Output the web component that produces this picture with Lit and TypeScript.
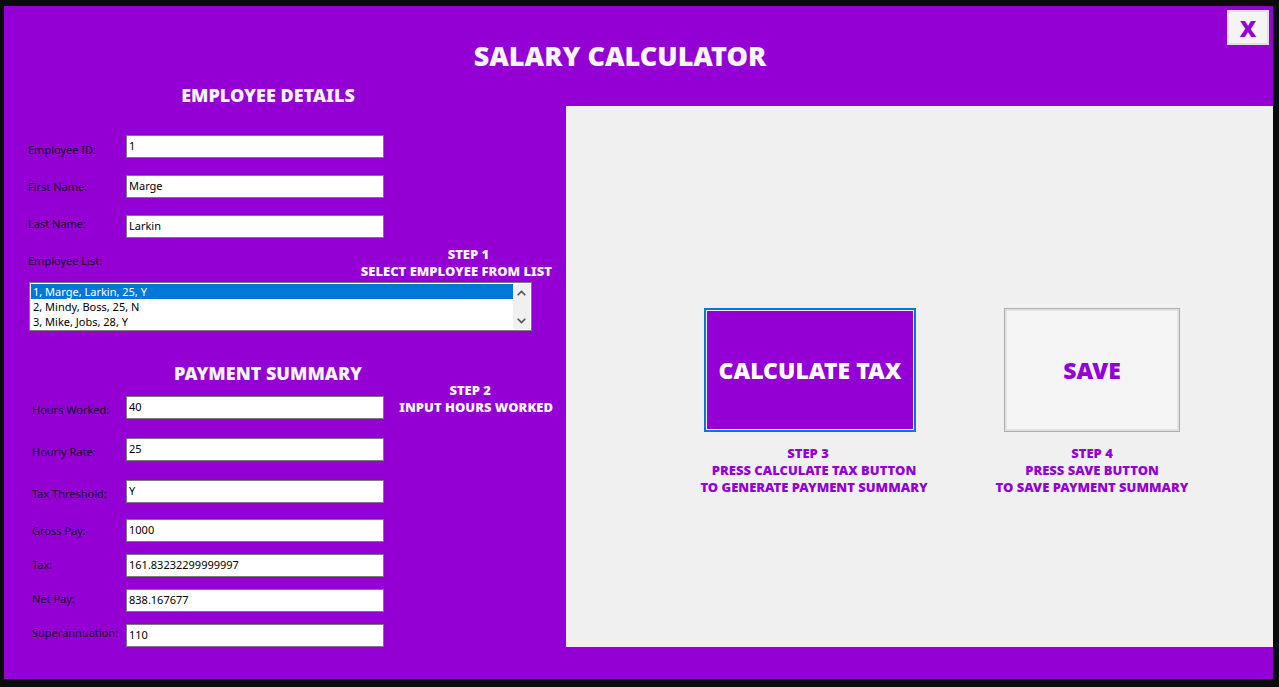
import { LitElement, html, css } from "lit";
import { customElement, state } from "lit/decorators.js";

interface Field {
  id: string;
  label: string;
  value: string;
}

const employeeFields: Field[] = [
  { id: "employee-id", label: "Employee ID:", value: "1" },
  { id: "first-name", label: "First Name:", value: "Marge" },
  { id: "last-name", label: "Last Name:", value: "Larkin" },
];

const rateFields: Field[] = [
  { id: "hours", label: "Hours Worked:", value: "40" },
  { id: "rate", label: "Hourly Rate:", value: "25" },
  { id: "threshold", label: "Tax Threshold:", value: "Y" },
];

const resultFields: Field[] = [
  { id: "gross", label: "Gross Pay:", value: "1000" },
  { id: "tax", label: "Tax:", value: "161.83232299999997" },
  { id: "net", label: "Net Pay:", value: "838.167677" },
  { id: "super", label: "Superannuation:", value: "110" },
];

const employees = ["1, Marge, Larkin, 25, Y", "2, Mindy, Boss, 25, N", "3, Mike, Jobs, 28, Y"];

@customElement("app-root")
export class AppRoot extends LitElement {
  @state() private selected = 0;

  static styles = css`
    :host {
      display: block;
      --violet: #9400d3;
      --display: "Noto Sans", "Open Sans", sans-serif;
      font: 11px/16px "Noto Sans", "Open Sans", sans-serif;
      color: #18022a;
    }
    * {
      box-sizing: border-box;
    }
    .frame {
      display: flex;
      min-height: 100vh;
      padding: 6px 6px 8px 4px;
      background: #0b0b0b;
    }
    .window {
      flex: 1;
      display: flex;
      flex-direction: column;
      padding-bottom: 32px;
      background: var(--violet);
    }
    .header {
      display: flex;
      align-items: flex-start;
      padding: 4px 4px 0 9px;
    }
    h1,
    h2,
    p {
      margin: 0;
      font-family: var(--display);
      font-weight: 900;
      text-align: center;
      color: whitesmoke;
    }
    h1 {
      flex: 1;
      padding: 28px 0 9px;
      font-size: 27px;
      line-height: 36px;
    }
    h2 {
      padding-left: 26px;
      font-size: 18px;
      line-height: 24px;
    }
    button {
      font-family: var(--display);
      font-weight: 900;
      padding: 0;
      border-radius: 0;
    }
    .close {
      width: 42px;
      height: 35px;
      border: 2px solid #e1e1e1;
      background: #f4f4f4;
      color: var(--violet);
      font-size: 23px;
      line-height: 28px;
    }
    .main {
      flex: 1;
      display: grid;
      grid-template-columns: minmax(0, 562fr) minmax(0, 707fr);
    }
    .details {
      padding-left: 24px;
    }
    .form {
      display: grid;
      grid-template-columns: 98px 258px;
    }
    .form h2 {
      grid-column: 2;
    }
    .labels,
    .inputs {
      display: flex;
      flex-direction: column;
    }
    .employee .labels {
      gap: 21px;
      padding-top: 35px;
    }
    .employee .inputs {
      gap: 17px;
      padding-top: 28px;
    }
    .pay {
      padding-left: 4px;
      grid-template-columns: 94px 258px 1fr;
    }
    .pay .labels {
      gap: 21px;
      padding-top: 17px;
    }
    .pay .inputs {
      gap: 16px;
      padding-top: 11px;
    }
    .group {
      display: flex;
      flex-direction: column;
    }
    .labels .rates {
      gap: 26px;
    }
    .labels .results {
      gap: 18px;
    }
    .inputs .rates {
      gap: 19px;
    }
    .inputs .results {
      gap: 12px;
    }
    input {
      width: 100%;
      height: 23px;
      padding: 0 2px 2px;
      border: 1px solid #7a7a7a;
      border-radius: 0;
      background: #fff;
      color: #000;
      font: inherit;
    }
    .list-head {
      display: flex;
      justify-content: space-between;
      padding: 8px 14px 0 0;
    }
    .list-head label {
      padding-top: 7px;
    }
    p {
      font-size: 13px;
      line-height: 17px;
    }
    .note span {
      display: block;
      white-space: nowrap;
    }
    .list-head .step {
      padding-left: 24px;
    }
    .pay .note {
      grid-column: 3;
      grid-row: 1 / 3;
      justify-self: end;
      padding: 21px 13px 0 0;
    }
    .pay .step {
      padding-right: 12px;
    }
    .listbox {
      display: flex;
      max-width: 503px;
      height: 49px;
      margin: 2px 0 30px 1px;
      padding: 1px;
      border: 1px solid #7a7a7a;
      background: #fff;
    }
    select {
      flex: 1;
      min-width: 0;
      height: 45px;
      padding: 0;
      border: 0;
      border-radius: 0;
      outline: 0;
      overflow: hidden;
      background: #fff;
      color: #000;
      font: inherit;
    }
    option {
      min-height: 15px;
      height: 15px;
      padding: 0 2px;
      line-height: 15px;
      color: #000;
    }
    option:checked {
      background: #0078d7 linear-gradient(#0078d7, #0078d7);
      color: #fff;
    }
    .scroll {
      display: flex;
      flex-direction: column;
      justify-content: space-between;
      width: 17px;
      background: #f0f0f0;
    }
    .scroll button {
      display: grid;
      place-items: center;
      height: 17px;
      border: 0;
      background: none;
    }
    .scroll svg {
      width: 9px;
      height: 6px;
      fill: none;
      stroke: #505050;
      stroke-width: 1.6;
    }
    .panel {
      display: flex;
      justify-content: center;
      align-items: flex-start;
      gap: 88px;
      margin-top: 23px;
      padding: 202px 0 24px 45px;
      background: #f0f0f0;
    }
    .action {
      display: flex;
      flex-direction: column;
      align-items: center;
      gap: 13px;
    }
    .action.compute {
      width: 212px;
    }
    .action.store {
      width: 176px;
    }
    .action p {
      color: var(--violet);
    }
    .compute .note {
      padding-left: 8px;
    }
    .compute .step {
      padding-right: 12px;
    }
    .big {
      width: 100%;
      height: 124px;
      font-size: 23px;
    }
    .calculate {
      border: 2px solid #0078d7;
      box-shadow: inset 0 0 0 1px #f0f0f0;
      background: var(--violet);
      color: #fff;
    }
    .save {
      border: 1px solid #adadad;
      box-shadow: inset 0 0 0 2px #e1e1e1;
      background: #f5f5f5;
      color: var(--violet);
    }
  `;

  private labels(fields: Field[]) {
    return fields.map((f) => html`<label for=${f.id}>${f.label}</label>`);
  }

  private inputs(fields: Field[]) {
    return fields.map((f) => html`<input id=${f.id} type="text" .value=${f.value} />`);
  }

  private move(delta: number) {
    this.selected = Math.min(employees.length - 1, Math.max(0, this.selected + delta));
  }

  render() {
    return html`
      <div class="frame">
        <div class="window">
          <header class="header">
            <h1>SALARY CALCULATOR</h1>
            <button class="close" type="button">X</button>
          </header>
          <main class="main">
            <div class="details">
              <section class="form employee">
                <h2>EMPLOYEE DETAILS</h2>
                <div class="labels">${this.labels(employeeFields)}</div>
                <div class="inputs">${this.inputs(employeeFields)}</div>
              </section>
              <div class="list-head">
                <label for="employees">Employee List:</label>
                <p class="note">
                  <span class="step">STEP 1</span>
                  <span>SELECT EMPLOYEE FROM LIST</span>
                </p>
              </div>
              <div class="listbox">
                <select
                  id="employees"
                  size="3"
                  @change=${(e: Event) => (this.selected = (e.target as HTMLSelectElement).selectedIndex)}
                >
                  ${employees.map((e, i) => html`<option .selected=${i === this.selected}>${e}</option>`)}
                </select>
                <div class="scroll">
                  <button type="button" aria-label="Previous" @click=${() => this.move(-1)}>
                    <svg viewBox="0 0 9 6"><path d="M0.7 5.2 4.5 1.4 8.3 5.2" /></svg>
                  </button>
                  <button type="button" aria-label="Next" @click=${() => this.move(1)}>
                    <svg viewBox="0 0 9 6"><path d="M0.7 0.8 4.5 4.6 8.3 0.8" /></svg>
                  </button>
                </div>
              </div>
              <section class="form pay">
                <h2>PAYMENT SUMMARY</h2>
                <p class="note">
                  <span class="step">STEP 2</span>
                  <span>INPUT HOURS WORKED</span>
                </p>
                <div class="labels">
                  <div class="group rates">${this.labels(rateFields)}</div>
                  <div class="group results">${this.labels(resultFields)}</div>
                </div>
                <div class="inputs">
                  <div class="group rates">${this.inputs(rateFields)}</div>
                  <div class="group results">${this.inputs(resultFields)}</div>
                </div>
              </section>
            </div>
            <section class="panel">
              <div class="action compute">
                <button class="big calculate" type="button">CALCULATE TAX</button>
                <p class="note">
                  <span class="step">STEP 3</span>
                  <span>PRESS CALCULATE TAX BUTTON</span>
                  <span>TO GENERATE PAYMENT SUMMARY</span>
                </p>
              </div>
              <div class="action store">
                <button class="big save" type="button">SAVE</button>
                <p class="note">
                  <span class="step">STEP 4</span>
                  <span>PRESS SAVE BUTTON</span>
                  <span>TO SAVE PAYMENT SUMMARY</span>
                </p>
              </div>
            </section>
          </main>
        </div>
      </div>
    `;
  }
}
